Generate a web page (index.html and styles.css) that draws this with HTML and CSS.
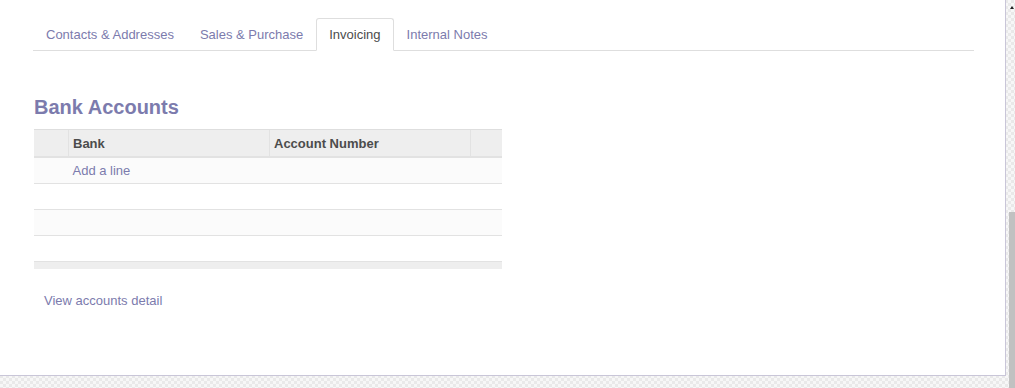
FILE: index.html
```html
<!DOCTYPE html>
<html lang="en">
<head>
    <meta charset="UTF-8">
    <meta name="viewport" content="width=device-width, initial-scale=1.0">
    <title>Partner - Invoicing</title>
    <link rel="stylesheet" href="styles.css">
</head>
<body>
    <div class="frame">
        <div class="sheet">
            <ul class="nav-tabs">
                <li><a href="#">Contacts &amp; Addresses</a></li>
                <li><a href="#">Sales &amp; Purchase</a></li>
                <li class="active"><a href="#">Invoicing</a></li>
                <li><a href="#">Internal Notes</a></li>
            </ul>

            <h2 class="section-title">Bank Accounts</h2>
            <table class="list-table">
                <thead>
                    <tr>
                        <th class="col-handle"></th>
                        <th class="col-bank">Bank</th>
                        <th class="col-account">Account Number</th>
                        <th class="col-delete"></th>
                    </tr>
                </thead>
                <tbody>
                    <tr><td></td><td colspan="3"><a href="#" class="add-line">Add a line</a></td></tr>
                    <tr><td></td><td></td><td></td><td></td></tr>
                    <tr><td></td><td></td><td></td><td></td></tr>
                    <tr><td></td><td></td><td></td><td></td></tr>
                </tbody>
                <tfoot>
                    <tr><td colspan="4"></td></tr>
                </tfoot>
            </table>

            <a href="#" class="detail-link">View accounts detail</a>
        </div>
        <div class="scrollbar">
            <div class="scroll-arrow"></div>
            <div class="scroll-thumb"></div>
        </div>
    </div>
</body>
</html>
```

FILE: styles.css
```css
body {
    margin: 0;
    font-family: "Liberation Sans", Arial, sans-serif;
    font-size: 13px;
    color: #4c4c4c;
    background-color: #f2f2f2;
    background-image: repeating-conic-gradient(#e9e9e9 0 25%, #f7f7f7 0 50%);
    background-size: 6px 6px;
    height: 388px;
    overflow: hidden;
}
a {
    color: #7c7bad;
    text-decoration: none;
}
.frame {
    display: flex;
    height: 388px;
}
.sheet {
    width: 1006px;
    height: 376px;
    background-color: #fff;
    border-right: 1px solid #c9c6d8;
    border-bottom: 1px solid #c9c6d8;
    padding: 18px 0 0 33px;
    box-sizing: border-box;
    flex: none;
}
.nav-tabs {
    display: flex;
    list-style: none;
    margin: 0;
    padding: 0;
    width: 941px;
    border-bottom: 1px solid #dedede;
}
.nav-tabs li {
    margin-bottom: -1px;
}
.nav-tabs a {
    display: block;
    padding: 7px 12px;
    line-height: 17px;
    border: 1px solid transparent;
    border-radius: 3px 3px 0 0;
}
.nav-tabs .active a {
    color: #4c4c4c;
    background-color: #fff;
    border-color: #dedede;
    border-bottom-color: #fff;
}
.section-title {
    margin: 44px 0 0 1px;
    font-size: 20px;
    line-height: 24px;
    font-weight: bold;
    color: #7c7bad;
}
.list-table {
    margin: 10px 0 0 1px;
    width: 468px;
    border-collapse: collapse;
    table-layout: fixed;
}
.list-table th {
    height: 26px;
    padding: 0 4px;
    text-align: left;
    font-weight: bold;
    background-color: #eee;
    border-top: 1px solid #dedede;
    border-left: 1px solid #e2e2e2;
    border-bottom: 2px solid #e2e2e2;
}
.list-table th:first-child {
    border-left: none;
}
.col-handle { width: 26px; }
.col-bank { width: 192px; }
.col-account { width: 192px; }
.list-table tbody td {
    height: 25px;
    padding: 0 4px;
    border-bottom: 1px solid #e2e2e2;
}
.list-table tbody tr:nth-child(odd) {
    background-color: #fbfbfb;
}
.list-table tfoot td {
    height: 7px;
    padding: 0;
    background-color: #eee;
}
.add-line {
    display: block;
}
.detail-link {
    display: inline-block;
    margin: 24px 0 0 11px;
}
.scrollbar {
    flex: none;
    width: 8px;
    margin-left: 1px;
    display: flex;
    flex-direction: column;
    align-items: flex-end;
}
.scroll-arrow {
    width: 0;
    height: 0;
    margin: 6px 1px 0 0;
    border-left: 2px solid transparent;
    border-right: 2px solid transparent;
    border-bottom: 3px solid #222;
}
.scroll-thumb {
    width: 6px;
    margin-top: auto;
    height: 176px;
    background-color: #c1c1c1;
}
```
